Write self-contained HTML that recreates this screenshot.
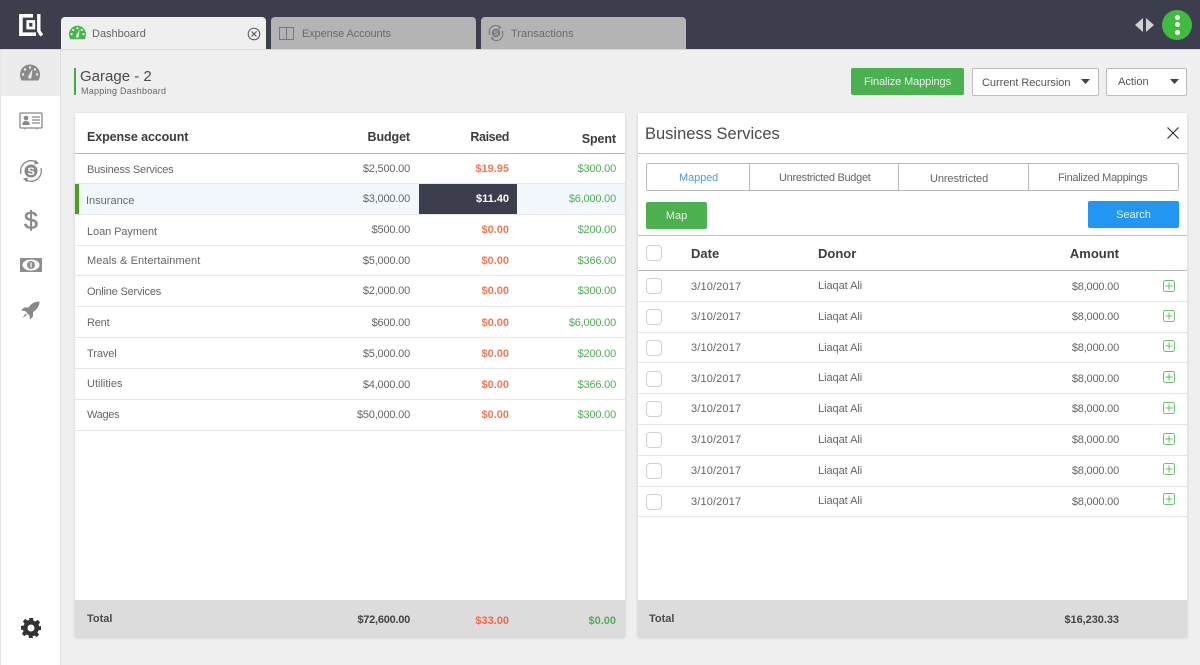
<!DOCTYPE html>
<html><head><meta charset="utf-8">
<style>
html,body{margin:0;padding:0;width:1200px;height:665px;overflow:hidden;background:#efefef;}
body{position:relative;font-family:"Liberation Sans",sans-serif;font-size:11px;color:#666;letter-spacing:0;}
div,svg{position:absolute;}
.t{white-space:nowrap;line-height:16px;height:16px;}
.r{text-align:right;}
.v{letter-spacing:-.2px;}
.d{letter-spacing:.14px;}
.n{letter-spacing:-.05px;}
.h{font-weight:bold;font-size:13px;color:#3c3c3c;}
.hl{font-size:12.5px;letter-spacing:-.1px;}
.o{color:#ee6a42;font-weight:bold;opacity:.9;}
.g{color:#4fae55;letter-spacing:-.2px;}
.l{left:75px;width:550px;height:1px;background:#e6e6e6;}
.m{left:638px;width:549px;height:1px;background:#e6e6e6;}
.c{left:646px;width:14px;height:14px;border:1px solid #d0d0d0;border-radius:4px;background:#fff;}
.tab{top:17px;height:32px;width:205px;background:#b4b4b4;border-radius:4px 4px 0 0;}
.seg{top:163px;height:28px;width:1px;background:#bbb;}
</style></head><body>
<div style="left:0;top:0;width:1200px;height:49px;background:#3d3e4d"></div>
<div style="left:0;top:49px;width:1200px;height:1px;background:#d8d8d8"></div>
<svg style="left:19px;top:13px" width="24" height="24" viewBox="0 0 24 24"><path d="M14 2.800H1.900V21.200H17" fill="none" stroke="#fff" stroke-width="3.600"/><rect x="8.800" y="8.500" width="6" height="6.500" fill="none" stroke="#fff" stroke-width="2.800"/><path d="M19.800 1v17l3 4.500" fill="none" stroke="#fff" stroke-width="3.400"/></svg>

<div class="tab" style="left:61px;background:#efefef"></div>
<div class="tab" style="left:271px"></div>
<div class="tab" style="left:481px"></div>
<svg style="left:69px;top:25px" width="17" height="15" viewBox="0 0 20 16"><path d="M10 0a10 10 0 0 1 10 10c0 2-.5 4-1.500 6H1.500C.5 14 0 12 0 10A10 10 0 0 1 10 0z" fill="#45b649"/><g fill="#efefef"><circle cx="10" cy="3" r="1.300"/><circle cx="5" cy="5" r="1.300"/><circle cx="15" cy="5" r="1.300"/><circle cx="3" cy="10" r="1.300"/><circle cx="17" cy="10" r="1.300"/><path d="M12.500 4.500L11.500 12a1.700 1.700 0 1 1-3-.5z"/></g></svg>
<div class="t" style="left:92px;top:26px">Dashboard</div>
<svg style="left:247px;top:27px" width="14" height="14" viewBox="0 0 14 14"><circle cx="7" cy="7" r="5.800" fill="none" stroke="#555" stroke-width="1"/><path d="M4.500 4.500l5 5M9.500 4.500l-5 5" stroke="#555" stroke-width="1.100"/></svg>
<svg style="left:279px;top:27px" width="15" height="13" viewBox="0 0 15 13"><rect x=".5" y=".5" width="14" height="12" fill="none" stroke="#777" stroke-width="1"/><path d="M7.500 1v11" stroke="#777" stroke-width="1"/></svg>
<div class="t" style="left:302px;top:26px;color:#6a6a6a;letter-spacing:-.1px">Expense Accounts</div>
<svg style="left:488px;top:25px" width="16" height="16" viewBox="0 0 16 16"><path d="M2 10A6.500 6.500 0 0 1 12.500 2.500M14 6A6.500 6.500 0 0 1 3.500 13.500" fill="none" stroke="#777" stroke-width="1.100"/><path d="M11 .8l2.500 2.400-3 .8zM5 15.200l-2.500-2.400 3-.8z" fill="#777"/><circle cx="8" cy="8" r="4.200" fill="#777"/><text x="8" y="10.500" font-size="7" font-weight="bold" text-anchor="middle" fill="#b4b4b4" font-family="Liberation Sans">S</text></svg>
<div class="t" style="left:511px;top:26px;color:#6a6a6a">Transactions</div>

<svg style="left:1135px;top:18px" width="20" height="14" viewBox="0 0 20 14"><path d="M8 0v14L0 7zM11 0v14l8-7z" fill="#cfcfd4"/></svg>
<div style="left:1162px;top:10px;width:30px;height:30px;border-radius:50%;background:#3fbb3f"></div>
<div style="left:1175px;top:15px;width:5px;height:5px;border-radius:50%;background:#fff"></div>
<div style="left:1175px;top:22px;width:5px;height:5px;border-radius:50%;background:#fff"></div>
<div style="left:1175px;top:30px;width:5px;height:5px;border-radius:50%;background:#fff"></div>

<div style="left:0;top:50px;width:60px;height:615px;background:#fff;border-right:1px solid #ddd"></div>
<div style="left:0;top:50px;width:60px;height:46px;background:#ececec"></div>
<div style="left:0;top:50px;width:1px;height:615px;background:#e6e6e6"></div>
<svg style="left:20px;top:64px" width="20" height="17" viewBox="0 0 20 16"><path d="M10 0a10 10 0 0 1 10 10c0 2-.5 4-1.500 6H1.500C.5 14 0 12 0 10A10 10 0 0 1 10 0z" fill="#8a8a8a"/><g fill="#ececec"><circle cx="10" cy="3" r="1.200"/><circle cx="5" cy="5" r="1.200"/><circle cx="15" cy="5" r="1.200"/><circle cx="3" cy="10" r="1.200"/><circle cx="17" cy="10" r="1.200"/><path d="M12.500 4.500L11.500 12a1.700 1.700 0 1 1-3-.5z"/></g></svg>
<svg style="left:19px;top:112px" width="24" height="18" viewBox="0 0 24 18"><rect x="1" y="1" width="22" height="15" rx="1" fill="none" stroke="#888" stroke-width="1.300"/><circle cx="7" cy="6" r="2.300" fill="#888"/><path d="M3.300 13c0-3 1.500-4 3.700-4s3.700 1 3.700 4z" fill="#888"/><path d="M13 5h8M13 8h8M13 11h8" stroke="#888" stroke-width="1.200"/><path d="M6 16v1.500M18 16v1.500" stroke="#888" stroke-width="1"/></svg>
<svg style="left:19px;top:159px" width="24" height="24" viewBox="0 0 24 24"><path d="M2 15A10.500 10.500 0 0 1 18 3.500M22 9A10.500 10.500 0 0 1 6 20.500" fill="none" stroke="#888" stroke-width="1.300"/><path d="M16 .8l4.200 3.400-5 1.400zM8 23.200l-4.200-3.400 5-1.400z" fill="#888"/><circle cx="12" cy="12" r="6.500" fill="#888"/><text x="12" y="15.800" font-size="11" font-weight="bold" text-anchor="middle" fill="#fff" font-family="Liberation Sans">S</text></svg>
<div class="t" style="left:20px;top:207px;width:22px;height:28px;line-height:28px;font-size:25px;-webkit-text-stroke:.5px #8a8a8a;text-align:center;color:#8a8a8a">$</div>
<svg style="left:20px;top:257px" width="22" height="16" viewBox="0 0 22 16"><path d="M0 1h22v14H0z" fill="#8f8f8f"/><ellipse cx="11" cy="8" rx="8.500" ry="5.500" fill="#fff"/><circle cx="11" cy="8" r="4" fill="#8f8f8f"/><path d="M11 5.600v4.800" stroke="#fff" stroke-width="1.200"/></svg>
<svg style="left:21px;top:301px" width="19" height="19" viewBox="0 0 19 19"><path d="M18.500.5c-5 0-8.500 2-11 6H3L0 9.500l4 .5 4.500 4.500.5 4 3-3v-4.500c4-2.500 6.500-6 6.500-10.500z" fill="#888"/><path d="M4.500 12.500L1.500 17l4.500-3z" fill="#888"/></svg>
<svg style="left:21px;top:618px" width="20" height="20" viewBox="0 0 20 20"><path d="M8 0h4l.5 2.700 1.900.8 2.300-1.600 2.400 2.400-1.600 2.300.8 1.900L20 8v4l-2.700.5-.8 1.900 1.600 2.300-2.400 2.400-2.300-1.600-1.900.8L12 20H8l-.5-2.700-1.900-.8-2.300 1.600L.9 15.700l1.600-2.300-.8-1.900L0 12V8l2.700-.5.8-1.900L1.900 3.300l2.400-2.400 2.300 1.600 1.900-.8z" fill="#333"/><circle cx="10" cy="10" r="3.500" fill="#fff"/></svg>

<div style="left:74px;top:68px;width:2px;height:27px;background:#45a84a"></div>
<div class="t" style="left:80px;top:68px;font-size:15px;height:18px;line-height:18px;color:#4a4a4a">Garage - 2</div>
<div class="t" style="left:81px;top:83px;font-size:9px;color:#666;letter-spacing:.25px">Mapping Dashboard</div>

<div style="left:851px;top:68px;width:113px;height:27px;background:#4caf50;border-radius:2px"></div>
<div class="t" style="left:851px;top:74px;width:113px;text-align:center;color:#e8f5e9;letter-spacing:-.1px">Finalize Mappings</div>
<div style="left:972px;top:68px;width:125px;height:26px;background:#fff;border:1px solid #bdbdbd;border-radius:2px"></div>
<div class="t" style="left:982px;top:75px;color:#555;letter-spacing:-.05px">Current Recursion</div>
<svg style="left:1081px;top:79px" width="9" height="5"><path d="M0 0h9L4.500 5z" fill="#444"/></svg>
<div style="left:1106px;top:68px;width:79px;height:26px;background:#fff;border:1px solid #bdbdbd;border-radius:2px"></div>
<div class="t" style="left:1118px;top:74px;color:#555">Action</div>
<svg style="left:1170px;top:79px" width="9" height="5"><path d="M0 0h9L4.500 5z" fill="#444"/></svg>

<!-- Left panel -->
<div style="left:75px;top:113px;width:550px;height:524px;background:#fff;box-shadow:0 1px 3px rgba(0,0,0,.15)"></div>
<div style="left:75px;top:600px;width:550px;height:37px;background:#dcdcdc"></div>
<div style="left:75px;top:153px;width:550px;height:1px;background:#bdbdbd"></div>
<div style="left:75px;top:183px;width:550px;height:31px;background:#f2f8fb"></div>
<div style="left:75px;top:183px;width:4px;height:31px;background:#4c9f1c"></div>
<div style="left:419px;top:183px;width:98px;height:31px;background:#3d3e4d"></div>
<div class="l" style="top:183px"></div><div class="l" style="top:214px"></div><div class="l" style="top:245px"></div><div class="l" style="top:275px"></div><div class="l" style="top:306px"></div><div class="l" style="top:337px"></div><div class="l" style="top:368px"></div><div class="l" style="top:399px"></div><div class="l" style="top:430px"></div>

<div class="t h hl" style="left:87px;top:129px">Expense account</div>
<div class="t h hl r" style="right:790px;top:129px">Budget</div>
<div class="t h hl r" style="right:691px;top:129px;letter-spacing:-.4px">Raised</div>
<div class="t h hl r" style="right:584px;top:131px">Spent</div>

<div class="t" style="left:87px;top:162px;letter-spacing:-.2px">Business Services</div>
<div class="t" style="left:86px;top:193px">Insurance</div>
<div class="t" style="left:87px;top:224px;letter-spacing:-.08px">Loan Payment</div>
<div class="t" style="left:87px;top:253px;letter-spacing:.1px">Meals &amp; Entertainment</div>
<div class="t" style="left:87px;top:284px;letter-spacing:-.2px">Online Services</div>
<div class="t" style="left:87px;top:315px;letter-spacing:-.2px">Rent</div>
<div class="t" style="left:87px;top:346px;letter-spacing:-.08px">Travel</div>
<div class="t" style="left:87px;top:376px">Utilities</div>
<div class="t" style="left:87px;top:407px;letter-spacing:-.3px">Wages</div>

<div class="t r v" style="right:790px;top:161px">$2,500.00</div>
<div class="t r v" style="right:790px;top:191px">$3,000.00</div>
<div class="t r v" style="right:790px;top:222px">$500.00</div>
<div class="t r v" style="right:790px;top:253px">$5,000.00</div>
<div class="t r v" style="right:790px;top:283px">$2,000.00</div>
<div class="t r v" style="right:790px;top:315px">$600.00</div>
<div class="t r v" style="right:790px;top:346px">$5,000.00</div>
<div class="t r v" style="right:790px;top:377px">$4,000.00</div>
<div class="t r v" style="right:790px;top:407px">$50,000.00</div>

<div class="t r o" style="right:691px;top:161px">$19.95</div>
<div class="t r" style="right:691px;top:191px;color:#fff;font-weight:bold">$11.40</div>
<div class="t r o" style="right:691px;top:222px">$0.00</div>
<div class="t r o" style="right:691px;top:253px">$0.00</div>
<div class="t r o" style="right:691px;top:283px">$0.00</div>
<div class="t r o" style="right:691px;top:315px">$0.00</div>
<div class="t r o" style="right:691px;top:346px">$0.00</div>
<div class="t r o" style="right:691px;top:377px">$0.00</div>
<div class="t r o" style="right:691px;top:407px">$0.00</div>

<div class="t r g" style="right:584px;top:161px">$300.00</div>
<div class="t r g" style="right:584px;top:191px">$6,000.00</div>
<div class="t r g" style="right:584px;top:222px">$200.00</div>
<div class="t r g" style="right:584px;top:253px">$366.00</div>
<div class="t r g" style="right:584px;top:283px">$300.00</div>
<div class="t r g" style="right:584px;top:315px">$6,000.00</div>
<div class="t r g" style="right:584px;top:346px">$200.00</div>
<div class="t r g" style="right:584px;top:377px">$366.00</div>
<div class="t r g" style="right:584px;top:407px">$300.00</div>

<div class="t" style="left:87px;top:611px;font-weight:bold;color:#4a4a4a">Total</div>
<div class="t r" style="right:790px;top:612px;font-weight:bold;color:#444;letter-spacing:-.25px">$72,600.00</div>
<div class="t r" style="right:691px;top:613px;font-weight:bold;color:#ee6a42">$33.00</div>
<div class="t r" style="right:584px;top:613px;font-weight:bold;color:#4fae55">$0.00</div>

<!-- Right panel -->
<div style="left:638px;top:113px;width:549px;height:524px;background:#fff;box-shadow:0 1px 3px rgba(0,0,0,.15)"></div>
<div style="left:638px;top:600px;width:549px;height:37px;background:#dcdcdc"></div>
<div class="t" style="left:645px;top:124px;height:20px;line-height:20px;font-size:16.5px;color:#4a4a4a">Business Services</div>
<svg style="left:1166px;top:126px" width="14" height="14"><path d="M1.500 1.500l11 11M12.500 1.500l-11 11" stroke="#333" stroke-width="1.200"/></svg>
<div style="left:638px;top:153px;width:549px;height:1px;background:#c4c4c4"></div>

<div style="left:646px;top:163px;width:531px;height:26px;border:1px solid #bbb;border-radius:2px"></div>
<div class="seg" style="left:749px"></div>
<div class="seg" style="left:898px"></div>
<div class="seg" style="left:1028px"></div>
<div class="t" style="left:679px;top:170px;color:#4a9de8;letter-spacing:-.1px">Mapped</div>
<div class="t" style="left:779px;top:170px;letter-spacing:-.3px">Unrestricted Budget</div>
<div class="t" style="left:930px;top:171px;letter-spacing:-.1px">Unrestricted</div>
<div class="t" style="left:1058px;top:170px;letter-spacing:-.3px">Finalized Mappings</div>

<div style="left:646px;top:202px;width:61px;height:27px;background:#4caf50;border-radius:2px"></div>
<div class="t" style="left:646px;top:208px;width:61px;text-align:center;color:#e8f5e9">Map</div>
<div style="left:1088px;top:201px;width:91px;height:27px;background:#2196f3;border-radius:2px"></div>
<div class="t" style="left:1088px;top:207px;width:91px;text-align:center;color:#e3f2fd">Search</div>

<div style="left:638px;top:235px;width:549px;height:1px;background:#c4c4c4"></div>
<div style="left:638px;top:270px;width:549px;height:1px;background:#bdbdbd"></div>
<div class="c" style="top:245px"></div>
<div class="t h" style="left:691px;top:246px">Date</div>
<div class="t h" style="left:818px;top:246px">Donor</div>
<div class="t h r" style="right:81px;top:246px">Amount</div>

<div class="m" style="top:301px"></div><div class="m" style="top:332px"></div><div class="m" style="top:362px"></div><div class="m" style="top:393px"></div><div class="m" style="top:424px"></div><div class="m" style="top:455px"></div><div class="m" style="top:486px"></div><div class="m" style="top:516px"></div>

<div class="c" style="top:278px"></div><div class="t d" style="left:691px;top:279px">3/10/2017</div><div class="t n" style="left:818px;top:278px">Liaqat Ali</div><div class="t r v" style="right:81px;top:279px">$8,000.00</div>
<div class="c" style="top:309px"></div><div class="t d" style="left:691px;top:309px">3/10/2017</div><div class="t n" style="left:818px;top:309px">Liaqat Ali</div><div class="t r v" style="right:81px;top:309px">$8,000.00</div>
<div class="c" style="top:340px"></div><div class="t d" style="left:691px;top:340px">3/10/2017</div><div class="t n" style="left:818px;top:340px">Liaqat Ali</div><div class="t r v" style="right:81px;top:340px">$8,000.00</div>
<div class="c" style="top:371px"></div><div class="t d" style="left:691px;top:371px">3/10/2017</div><div class="t n" style="left:818px;top:370px">Liaqat Ali</div><div class="t r v" style="right:81px;top:371px">$8,000.00</div>
<div class="c" style="top:401px"></div><div class="t d" style="left:691px;top:401px">3/10/2017</div><div class="t n" style="left:818px;top:401px">Liaqat Ali</div><div class="t r v" style="right:81px;top:401px">$8,000.00</div>
<div class="c" style="top:432px"></div><div class="t d" style="left:691px;top:432px">3/10/2017</div><div class="t n" style="left:818px;top:432px">Liaqat Ali</div><div class="t r v" style="right:81px;top:432px">$8,000.00</div>
<div class="c" style="top:463px"></div><div class="t d" style="left:691px;top:463px">3/10/2017</div><div class="t n" style="left:818px;top:463px">Liaqat Ali</div><div class="t r v" style="right:81px;top:463px">$8,000.00</div>
<div class="c" style="top:494px"></div><div class="t d" style="left:691px;top:494px">3/10/2017</div><div class="t n" style="left:818px;top:493px">Liaqat Ali</div><div class="t r v" style="right:81px;top:494px">$8,000.00</div>

<svg style="left:1163px;top:280px" width="12" height="12"><rect x=".5" y=".5" width="11" height="11" rx="2" fill="none" stroke="#6cc070"/><path d="M6 2.500v7M2.500 6h7" stroke="#6cc070"/></svg>
<svg style="left:1163px;top:310px" width="12" height="12"><rect x=".5" y=".5" width="11" height="11" rx="2" fill="none" stroke="#6cc070"/><path d="M6 2.500v7M2.500 6h7" stroke="#6cc070"/></svg>
<svg style="left:1163px;top:340px" width="12" height="12"><rect x=".5" y=".5" width="11" height="11" rx="2" fill="none" stroke="#6cc070"/><path d="M6 2.500v7M2.500 6h7" stroke="#6cc070"/></svg>
<svg style="left:1163px;top:371px" width="12" height="12"><rect x=".5" y=".5" width="11" height="11" rx="2" fill="none" stroke="#6cc070"/><path d="M6 2.500v7M2.500 6h7" stroke="#6cc070"/></svg>
<svg style="left:1163px;top:402px" width="12" height="12"><rect x=".5" y=".5" width="11" height="11" rx="2" fill="none" stroke="#6cc070"/><path d="M6 2.500v7M2.500 6h7" stroke="#6cc070"/></svg>
<svg style="left:1163px;top:433px" width="12" height="12"><rect x=".5" y=".5" width="11" height="11" rx="2" fill="none" stroke="#6cc070"/><path d="M6 2.500v7M2.500 6h7" stroke="#6cc070"/></svg>
<svg style="left:1163px;top:463px" width="12" height="12"><rect x=".5" y=".5" width="11" height="11" rx="2" fill="none" stroke="#6cc070"/><path d="M6 2.500v7M2.500 6h7" stroke="#6cc070"/></svg>
<svg style="left:1163px;top:493px" width="12" height="12"><rect x=".5" y=".5" width="11" height="11" rx="2" fill="none" stroke="#6cc070"/><path d="M6 2.500v7M2.500 6h7" stroke="#6cc070"/></svg>

<div class="t" style="left:649px;top:611px;font-weight:bold;color:#4a4a4a">Total</div>
<div class="t r" style="right:81px;top:612px;font-weight:bold;color:#444;letter-spacing:-.05px">$16,230.33</div>
</body></html>
